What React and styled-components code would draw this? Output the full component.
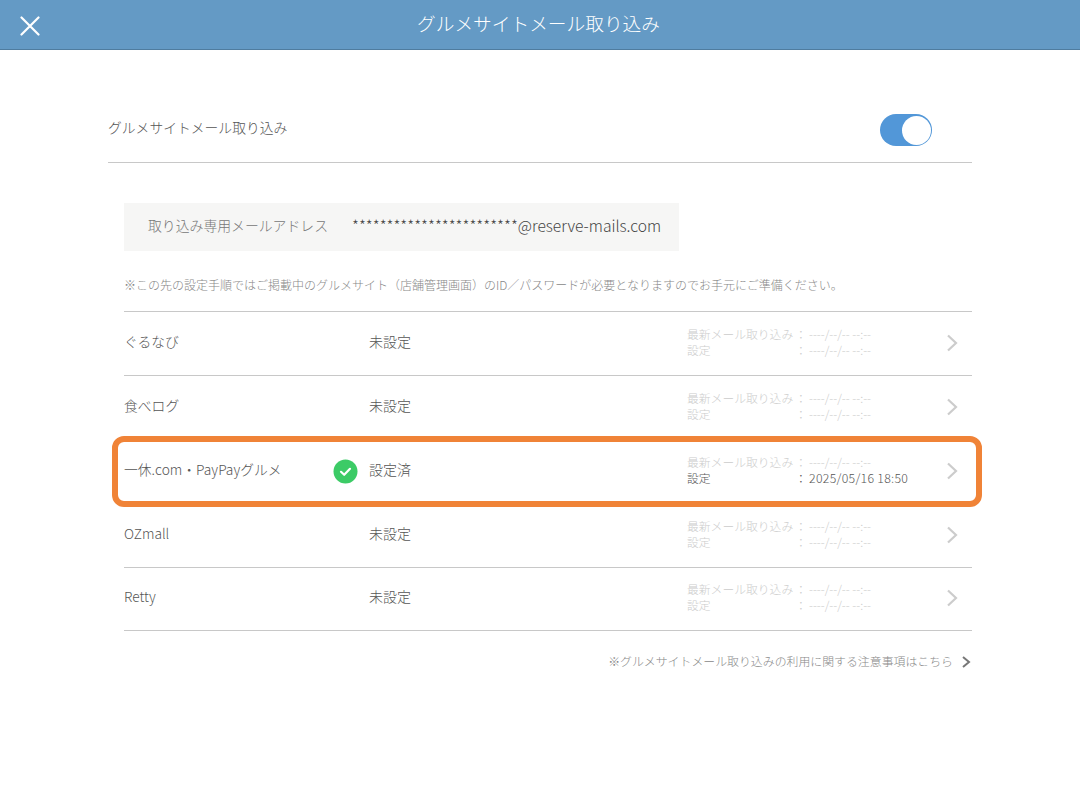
import styled, { createGlobalStyle } from 'styled-components';

const GlobalStyle = createGlobalStyle`
  html, body {
    margin: 0;
    padding: 0;
    background: #fff;
  }
  body {
    font-family: "Noto Sans CJK JP", "Noto Sans", sans-serif;
    font-weight: 300;
    color: #555;
  }
`;

const Page = styled.div`
  width: 1080px;
  height: 790px;
  overflow: hidden;
  background: #fff;
`;

const Header = styled.header`
  position: relative;
  height: 49px;
  background: #649ac5;
  border-bottom: 1px solid #4f7c9f;
  display: flex;
  align-items: center;
  justify-content: center;
`;

const HeaderTitle = styled.h1`
  margin: 0 3px 3px 0;
  font-size: 18.7px;
  font-weight: 300;
  color: #fff;
  line-height: 24px;
`;

const CloseButton = styled.button`
  position: absolute;
  left: 20px;
  top: 16px;
  width: 20px;
  height: 20px;
  padding: 0;
  border: 0;
  background: none;
  display: block;
`;

const Content = styled.main`
  padding: 47px 108px 0;
`;

const ToggleRow = styled.div`
  height: 66px;
  border-bottom: 1px solid #c8c8c8;
  display: flex;
  align-items: center;
  justify-content: space-between;
  padding: 1px 40px 0 0;
  box-sizing: border-box;
`;

const ToggleLabel = styled.span`
  font-size: 13.8px;
  color: #555;
  margin-bottom: 7px;
`;

const Toggle = styled.span`
  width: 52px;
  height: 32px;
  border-radius: 16px;
  background: #5297d8;
  display: flex;
  align-items: center;
  justify-content: flex-end;
  padding-right: 1.5px;
  box-sizing: border-box;
`;

const Knob = styled.span`
  width: 29px;
  height: 29px;
  border-radius: 50%;
  background: #fff;
`;

const Inner = styled.div`
  padding-left: 16px;
`;

const AddressBox = styled.div`
  margin-top: 40px;
  width: 555px;
  height: 48px;
  background: #f6f6f5;
  display: flex;
  align-items: center;
  padding: 0 0 5px 24px;
  box-sizing: border-box;
`;

const AddressLabel = styled.span`
  width: 204px;
  color: #777;
  font-size: 13.85px;
`;

const AddressValue = styled.span`
  color: #444;
  font-size: 15.6px;
  white-space: nowrap;
`;

const Note = styled.p`
  margin: 25px 0 0;
  height: 18px;
  line-height: 18px;
  font-size: 12px;
  color: #888;
  white-space: nowrap;
`;

const List = styled.div`
  position: relative;
  margin-top: 17px;
  border-top: 1px solid #c8c8c8;
`;

const Row = styled.div`
  height: 64px;
  box-sizing: border-box;
  border-bottom: 1px solid #c8c8c8;
  display: flex;
  align-items: center;
  &:nth-child(5) {
    height: 63px;
  }
`;

const SiteName = styled.span`
  width: 209px;
  font-size: 13.8px;
  color: #555;
  white-space: nowrap;
  margin-bottom: 6px;
`;

const StatusIcon = styled.span`
  width: 36px;
  display: flex;
  justify-content: flex-start;
  height: 25px;
`;

const Status = styled.span`
  width: 318px;
  font-size: 14px;
  color: #555;
  margin-bottom: 6px;
`;

const Dates = styled.div`
  width: 259px;
  display: grid;
  grid-template-columns: 108px 14px auto;
  font-size: 11.8px;
  line-height: 16px;
  margin-bottom: 4px;
`;

const DateCell = styled.span`
  color: ${({ $active }) => ($active ? '#555' : '#ccc')};
  white-space: nowrap;
`;

const DateValue = styled(DateCell)`
  font-size: ${({ $active }) => ($active ? '12.3px' : '11.8px')};
  letter-spacing: ${({ $active }) => ($active ? '0.3px' : '0')};
`;

const Chevron = styled.svg`
  display: block;
  flex: none;
  margin-bottom: 2px;
`;

const Highlight = styled.div`
  position: absolute;
  left: -12px;
  top: 124px;
  width: 870px;
  height: 71px;
  box-sizing: border-box;
  border: 6px solid #f08337;
  border-radius: 12px;
  pointer-events: none;
`;

const Footnote = styled.a`
  margin-top: 21px;
  display: flex;
  justify-content: flex-end;
  align-items: center;
  gap: 7px;
  font-size: 11.9px;
  line-height: 18px;
  color: #888;
`;

const FootnoteArrow = styled.svg`
  display: block;
  margin-top: 2px;
`;

const sites = [
  { name: 'ぐるなび', status: '未設定' },
  { name: '食べログ', status: '未設定' },
  { name: '一休.com・PayPayグルメ', status: '設定済', done: true, date: '2025/05/16 18:50' },
  { name: 'OZmall', status: '未設定' },
  { name: 'Retty', status: '未設定' },
];

function App() {
  return (
    <Page>
      <GlobalStyle />
      <Header>
        <CloseButton aria-label="閉じる">
          <svg width="20" height="20" viewBox="0 0 20 20">
            <path d="M1.5 1.5 18.5 18.5M18.5 1.5 1.5 18.5" stroke="#fff" strokeWidth="2.2" strokeLinecap="round" />
          </svg>
        </CloseButton>
        <HeaderTitle>グルメサイトメール取り込み</HeaderTitle>
      </Header>
      <Content>
        <ToggleRow>
          <ToggleLabel>グルメサイトメール取り込み</ToggleLabel>
          <Toggle>
            <Knob />
          </Toggle>
        </ToggleRow>
        <Inner>
          <AddressBox>
            <AddressLabel>取り込み専用メールアドレス</AddressLabel>
            <AddressValue>************************@reserve-mails.com</AddressValue>
          </AddressBox>
          <Note>※この先の設定手順ではご掲載中のグルメサイト（店舗管理画面）のID／パスワードが必要となりますのでお手元にご準備ください。</Note>
          <List>
            {sites.map((site) => (
              <Row key={site.name}>
                <SiteName>{site.name}</SiteName>
                <StatusIcon>
                  {site.done && (
                    <svg width="25" height="25" viewBox="0 0 25 25">
                      <circle cx="12.5" cy="12.5" r="12" fill="#3ccb66" />
                      <path d="M8 12.8 11.2 15.8 17 9.8" fill="none" stroke="#fff" strokeWidth="2.2" strokeLinecap="round" strokeLinejoin="round" />
                    </svg>
                  )}
                </StatusIcon>
                <Status>{site.status}</Status>
                <Dates>
                  <DateCell>最新メール取り込み</DateCell>
                  <DateCell>：</DateCell>
                  <DateValue>----/--/-- --:--</DateValue>
                  <DateCell $active={site.done}>設定</DateCell>
                  <DateCell $active={site.done}>：</DateCell>
                  <DateValue $active={site.done}>{site.date || '----/--/-- --:--'}</DateValue>
                </Dates>
                <Chevron width="12" height="18" viewBox="0 0 12 18">
                  <path d="M2 1.5 10 9 2 16.5" fill="none" stroke="#ccc" strokeWidth="2.2" />
                </Chevron>
              </Row>
            ))}
            <Highlight />
          </List>
          <Footnote>
            ※グルメサイトメール取り込みの利用に関する注意事項はこちら
            <FootnoteArrow width="12" height="12" viewBox="0 0 12 12">
              <path d="M3 1 9 6 3 11" fill="none" stroke="#777" strokeWidth="2" />
            </FootnoteArrow>
          </Footnote>
        </Inner>
      </Content>
    </Page>
  );
}

export default App;
